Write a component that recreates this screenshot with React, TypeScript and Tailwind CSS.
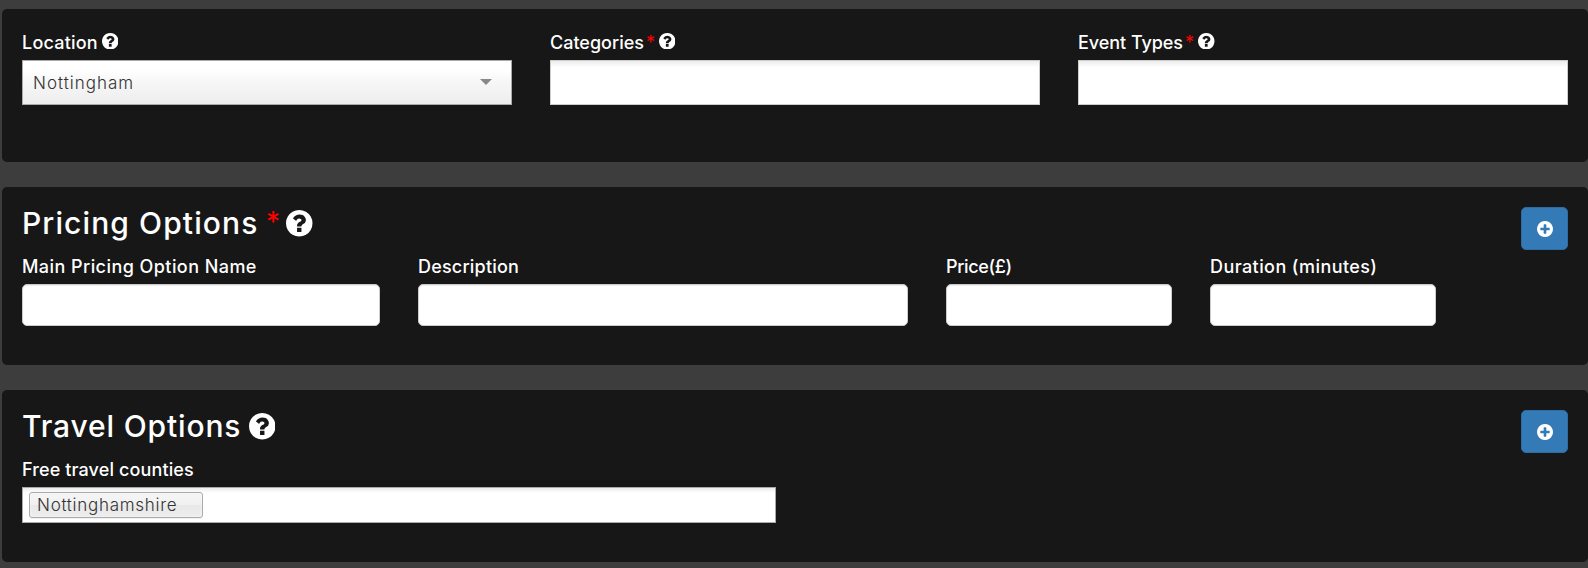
import type { ReactNode } from "react";

// glyph cut-outs, each one is followed by the surrounding disc
const QUESTION =
  "M1024 1376v-192q0-14-9-23t-23-9h-192q-14 0-23 9t-9 23v192q0 14 9 23t23 9h192q14 0 23-9t9-23zm256-672q0-88-55.5-163t-138.5-116-170-41q-243 0-371 213-15 24 8 42l132 100q7 6 19 6 16 0 25-12 53-68 86-92 34-24 86-24 48 0 85.5 26t37.5 59q0 38-20 61t-68 45q-63 28-115.5 86.5t-52.5 125.5v36q0 14 9 23t23 9h192q14 0 23-9t9-23q0-19 21.5-49.5t54.5-49.5q32-18 49-28.5t46-35 44.5-48 28-60.5 12.5-81z";
const PLUS =
  "M1344 960v-128q0-26-19-45t-45-19h-256v-256q0-26-19-45t-45-19h-128q-26 0-45 19t-19 45v256h-256q-26 0-45 19t-19 45v128q0 26 19 45t45 19h256v256q0 26 19 45t45 19h128q26 0 45-19t19-45v-256h256q26 0 45-19t19-45z";
const DISC =
  "M1664 896q0 209-103 385.5t-279.5 279.5-385.5 103-385.5-103-279.5-279.5-103-385.5 103-385.5 279.5-279.5 385.5-103 385.5 103 279.5 279.5 103 385.5z";

function DiscIcon({ glyph, className }: { glyph: string; className: string }) {
  return (
    <svg viewBox="128 128 1536 1536" fill="currentColor" className={`shrink-0 ${className}`}>
      <path d={glyph + DISC} />
    </svg>
  );
}

function AddButton() {
  return (
    <button
      type="button"
      aria-label="Add"
      className="flex h-[43px] w-[47px] shrink-0 items-center justify-center rounded-[5px] border border-[#2e6da4] bg-[#337ab7] text-white"
    >
      <DiscIcon glyph={PLUS} className="ml-px size-[16px]" />
    </button>
  );
}

function Panel({ className, children }: { className: string; children: ReactNode }) {
  return (
    <section className={`rounded-[5px] bg-[#171717] px-5 pt-5 ${className}`}>{children}</section>
  );
}

type LabelProps = {
  text: string;
  tracking: string;
  required?: boolean;
  help?: boolean;
};

function Label({ text, tracking, required, help }: LabelProps) {
  return (
    <div className="mb-[5px] flex h-[26px] items-center pt-0.5 text-[18px] leading-[26px] font-medium whitespace-nowrap">
      <span className={tracking}>{text}</span>
      {required && <span className="ml-[2px] w-[11px] text-[18px] font-normal text-[#f00]">*</span>}
      {help && (
        <DiscIcon
          glyph={QUESTION}
          className={`-mt-1 size-[16.5px] ${required ? "ml-[2px]" : "ml-1"}`}
        />
      )}
    </div>
  );
}

const INPUT =
  "block h-[42px] w-full rounded-[5px] border border-[#ccc] bg-white px-3 text-[#555] shadow-[inset_0_1px_1px_rgba(0,0,0,0.075)] outline-none";

// multi-select box, square corners with a faint shade along the top
const CHOICES = "w-full border bg-white bg-[linear-gradient(#eee_1%,#fff_15%)]";

export default function App() {
  return (
    <main className="h-[568px] w-full overflow-hidden bg-[#3d3d3d] pt-[9px] pl-[2px] font-['Inter',sans-serif] text-white">
      <Panel className="h-[153px]">
        <div className="grid grid-cols-3 gap-[38px]">
          <div>
            <Label text="Location" tracking="tracking-[0.2px]" help />
            <div className="flex h-[45px] items-center justify-between border border-[#aaa] bg-[linear-gradient(#fff_20%,#f6f6f6_50%,#eee_100%)] pr-[19px] pl-[10px]">
              <span className="pt-0.5 text-[17px] font-light tracking-[1px] text-[#333]">
                Nottingham
              </span>
              <svg viewBox="0 0 12 6" className="-mt-0.5 h-1.5 w-3 fill-[#888]">
                <path d="M0 0h12L6 6z" />
              </svg>
            </div>
          </div>
          <div>
            <Label text="Categories" tracking="tracking-[0px]" required help />
            <div className={`h-[45px] border-[#ccc] ${CHOICES}`} />
          </div>
          <div>
            <Label text="Event Types" tracking="tracking-[-0.05px]" required help />
            <div className={`h-[45px] border-[#ccc] ${CHOICES}`} />
          </div>
        </div>
      </Panel>

      <Panel className="mt-[25px] h-[178px]">
        <div className="flex h-[46px] items-start justify-between">
          <h2 className="flex h-[33px] items-center text-[30px] leading-[33px] font-medium whitespace-nowrap">
            <span className="w-[237px] tracking-[1.1px]">Pricing Options</span>
            <span className="ml-[7px] w-[17px] pb-0.5 text-[28px] font-normal text-[#f00]">*</span>
            <DiscIcon glyph={QUESTION} className="ml-[3px] size-[26.5px]" />
          </h2>
          <AddButton />
        </div>
        <div className="flex gap-[38px]">
          <div className="w-[358px]">
            <Label text="Main Pricing Option Name" tracking="tracking-[0.44px]" />
            <input type="text" className={INPUT} />
          </div>
          <div className="w-[490px]">
            <Label text="Description" tracking="tracking-[0.2px]" />
            <input type="text" className={INPUT} />
          </div>
          <div className="w-[226px]">
            <Label text="Price(£)" tracking="tracking-[-0.35px]" />
            <input type="text" className={INPUT} />
          </div>
          <div className="w-[226px]">
            <Label text="Duration (minutes)" tracking="tracking-[0.42px]" />
            <input type="text" className={INPUT} />
          </div>
        </div>
      </Panel>

      <Panel className="mt-[25px] h-[172px]">
        <div className="flex h-[46px] items-start justify-between">
          <h2 className="flex h-[33px] items-center text-[30px] leading-[33px] font-medium whitespace-nowrap">
            <span className="w-[220px] tracking-[0.85px]">Travel Options</span>
            <DiscIcon glyph={QUESTION} className="ml-[6.5px] size-[26.5px]" />
          </h2>
          <AddButton />
        </div>
        <div className="w-[754px]">
          <Label text="Free travel counties" tracking="tracking-[0.12px]" />
          <div className={`flex h-9 items-center border-[#aaa] pl-[6px] ${CHOICES}`}>
            <span className="flex h-[26px] w-[174px] items-center rounded-[3px] border border-[#aaa] bg-[linear-gradient(#f4f4f4_20%,#f0f0f0_50%,#e8e8e8_52%,#eee_100%)] pt-0.5 pl-[7px] text-[17px] font-light tracking-[0.72px] text-[#333] shadow-[0_0_2px_#fff_inset,0_1px_0_rgba(0,0,0,0.05)]">
              Nottinghamshire
            </span>
          </div>
        </div>
      </Panel>
    </main>
  );
}
